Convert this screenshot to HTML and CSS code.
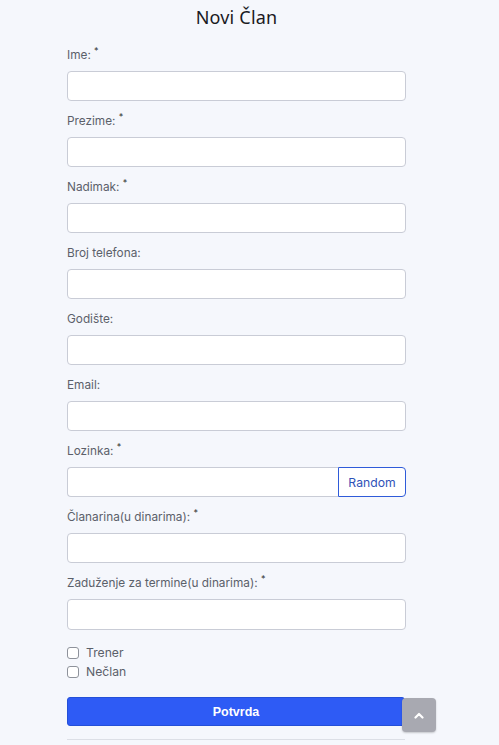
FILE: index.html
```html
<!DOCTYPE html>
<html lang="sr">
<head>
<meta charset="utf-8">
<title>Novi Član</title>
<link rel="stylesheet" href="styles.css">
</head>
<body>
<main class="page">
  <h1 class="title">Novi Član</h1>
  <form class="form">
    <div class="group">
      <label class="label">Ime: <sup class="req">*</sup></label>
      <input class="input" type="text">
    </div>
    <div class="group">
      <label class="label">Prezime: <sup class="req">*</sup></label>
      <input class="input" type="text">
    </div>
    <div class="group">
      <label class="label">Nadimak: <sup class="req">*</sup></label>
      <input class="input" type="text">
    </div>
    <div class="group">
      <label class="label">Broj telefona:</label>
      <input class="input" type="text">
    </div>
    <div class="group">
      <label class="label">Godište:</label>
      <input class="input" type="text">
    </div>
    <div class="group">
      <label class="label">Email:</label>
      <input class="input" type="text">
    </div>
    <div class="group">
      <label class="label">Lozinka: <sup class="req">*</sup></label>
      <div class="input-group">
        <input class="input input-joined" type="text">
        <button type="button" class="btn-random">Random</button>
      </div>
    </div>
    <div class="group">
      <label class="label">Članarina(u dinarima): <sup class="req">*</sup></label>
      <input class="input" type="text">
    </div>
    <div class="group">
      <label class="label">Zaduženje za termine(u dinarima): <sup class="req">*</sup></label>
      <input class="input input-tall" type="text">
    </div>
    <div class="checks">
      <label class="check"><span class="box"></span>Trener</label>
      <label class="check"><span class="box"></span>Nečlan</label>
    </div>
    <div class="submit-row">
      <button type="button" class="btn-submit">Potvrda</button>
      <button type="button" class="btn-top" aria-label="Na vrh">
        <svg width="10" height="7" viewBox="0 0 10 7"><path d="M1.5 5.5 L5 2 L8.5 5.5" fill="none" stroke="#fff" stroke-width="2.2" stroke-linecap="round" stroke-linejoin="round"/></svg>
      </button>
    </div>
    <hr class="rule">
  </form>
</main>
</body>
</html>
```
FILE: styles.css
```css
* { box-sizing: border-box; }
html, body {
  margin: 0;
  padding: 0;
  background: #f5f7fc;
}
body {
  font-family: Inter, "Noto Sans", "Liberation Sans", sans-serif;
  color: #555a63;
}
.page {
  width: 499px;
  padding-top: 5px;
}
.title {
  margin: 0 0 18px;
  padding-right: 26px;
  text-align: center;
  font-family: "Noto Sans", Inter, sans-serif;
  font-weight: 400;
  font-size: 18px;
  line-height: 24px;
  color: #1a1a1f;
  letter-spacing: 0.2px;
}
.form {
  margin: 0 0 0 67px;
  width: 339px;
}
.group {
  margin-bottom: 12px;
}
.group + .group {
  margin-top: 0.2px;
}
.label {
  display: block;
  font-size: 11.8px;
  line-height: 16px;
  margin-bottom: 8px;
  color: #5b606a;
}
.req {
  font-size: 9px;
  line-height: 0;
  vertical-align: 5px;
  color: #333;
}
.input {
  display: block;
  width: 100%;
  height: 30px;
  border: 1px solid #c9ccd6;
  border-radius: 4px;
  background: #fff;
  padding: 0 10px;
  font: inherit;
}
.input-tall {
  height: 31px;
}
.input-group {
  display: flex;
}
.input-joined {
  flex: 1;
  border-radius: 4px 0 0 4px;
  border-right: none;
}
.btn-random {
  width: 68px;
  height: 30px;
  border: 1px solid #2f5bd9;
  border-radius: 0 4px 4px 0;
  background: #fff;
  color: #2f52b8;
  font-family: inherit;
  font-size: 12.2px;
  padding: 0;
}
.checks {
  display: flex;
  flex-direction: column;
  padding-top: 3px;
  gap: 3px;
}
.check {
  display: flex;
  align-items: center;
  gap: 7px;
  font-size: 12.2px;
  line-height: 16px;
  color: #5b606a;
}
.box {
  width: 12px;
  height: 12px;
  border: 1px solid #8e929b;
  border-radius: 3px;
  background: #fff;
}
.submit-row {
  position: relative;
  margin-top: 17px;
}
.btn-submit {
  display: block;
  width: 338px;
  height: 29px;
  border: 1px solid #2450d8;
  border-radius: 3px;
  background: #2e5bf5;
  color: #fff;
  font-family: "Liberation Sans", Arial, sans-serif;
  font-weight: 700;
  font-size: 12.5px;
  padding: 0;
}
.btn-top {
  position: absolute;
  left: 335px;
  top: 1px;
  width: 34px;
  height: 34px;
  border: none;
  border-radius: 4px;
  background: #a8a9b1;
  box-shadow: 0 1px 2px rgba(0,0,0,0.2);
  display: flex;
  align-items: center;
  justify-content: center;
  padding: 0;
}
.rule {
  margin: 13px 0 0;
  width: 338px;
  border: none;
  border-top: 1px solid #dcdfe6;
}
```
